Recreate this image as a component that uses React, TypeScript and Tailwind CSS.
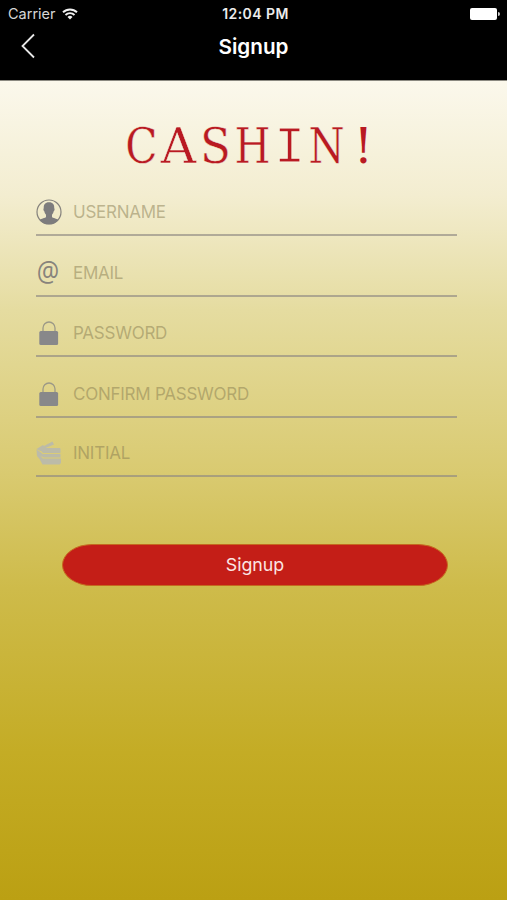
import type { ReactNode } from "react";

const UserIcon = () => (
    <svg viewBox="0 0 26 26" className="h-[26px] w-[26px]">
        <circle cx="13" cy="13" r="12" fill="none" stroke="#85827d" strokeWidth="1.2" />
        <path d="M13 3.200c-3.900 0-5.500 2.500-5.200 6-.8.4-.3 2.700.5 3.100.2 1.500 1 2.700 1.700 3.500v2.200c-.8 1.300-4.600 1.400-6.400 2.900 2 2.700 5.500 4.400 9.400 4.400s7.400-1.700 9.400-4.400c-1.800-1.500-5.600-1.600-6.400-2.900v-2.200c.7-.8 1.500-2 1.700-3.500.8-.4 1.300-2.700.5-3.100.3-3.500-1.300-6-5.200-6z" fill="#7d7c7d" />
    </svg>
);

const AtIcon = () => (
    <span className="-ml-[2px] -mt-[4px] scale-y-[1.14] font-['Open_Sans',sans-serif] text-[25px] font-medium leading-[26px] text-[#87837c]">@</span>
);

const LockIcon = () => (
    <svg viewBox="0 0 26 26" className="h-[26px] w-[26px]">
        <path d="M7 12V8a6 6 0 0 1 12 0v4" fill="none" stroke="#9c9987" strokeWidth="1.3" />
        <rect x="3.3" y="11" width="18.8" height="14" rx="1.5" fill="#88888a" />
    </svg>
);

const MoneyIcon = () => (
    <svg viewBox="0 0 26 26" className="h-[26px] w-[26px]" fill="#bcbba8">
        <path d="M.5 9 7 5l1 1L16.500 1.500l1.500 3L9.500 8 4 11z" />
        <path d="M6 8h18l.5 1v4H7L4 10z" />
        <path d="M.5 9.500 5 12.500 6.500 14h18v3.600H8L4.500 16 7 18.400H25V23l-1.500 1.500H6.500L3.500 19 1 16z" />
    </svg>
);

const Field = ({ icon, label, height }: { icon: ReactNode; label: string; height: string }) => (
    <div className={`flex items-end border-b-2 border-[#8f8982]/65 ${height}`}>
        <div className="mb-[9px] flex h-[26px] w-[26px] items-center justify-center">{icon}</div>
        <span className="mb-[10px] ml-[11px] font-['Inter',sans-serif] text-[17px] leading-6 tracking-[-0.25px] text-[#867b50]/50">
            {label}
        </span>
    </div>
);

// every letter sits in a cell of the same width, like on a typewriter
const letters = [
    { char: "C", style: "font-['DejaVu_Serif',serif] scale-x-[0.88]" },
    { char: "A", style: "font-['DejaVu_Serif',serif] scale-x-[1.02]" },
    { char: "S", style: "font-['DejaVu_Serif',serif] scale-x-[0.94]" },
    { char: "H", style: "font-['DejaVu_Serif',serif] scale-x-[0.86]" },
    { char: "I", style: "relative top-[3px] font-['Liberation_Mono',monospace] text-[52px] [-webkit-text-stroke:1.2px_#f8f4e0]" },
    { char: "N", style: "font-['DejaVu_Serif',serif] scale-x-[0.86]" },
    { char: "!", style: "font-['DejaVu_Serif',serif] [-webkit-text-stroke:0px]" },
];

const App = () => {
    return (
        <div className="flex h-[900px] w-[507px] flex-col overflow-hidden bg-black font-['Inter',sans-serif]">
            <header className="h-20 shrink-0 text-white">
                <div className="grid h-7 grid-cols-3 items-center pl-2 pr-[7px]">
                    <div className="flex items-center text-[14.5px] text-[#d6d6d6]">
                        Carrier
                        <svg viewBox="0 0 16 12" className="ml-[6px] h-3 w-4" fill="none" stroke="#f2f2f2" strokeWidth="1.9">
                            <path d="M1 4.300a10 10 0 0 1 14 0M3.500 7a6.400 6.400 0 0 1 9 0" />
                            <path d="m5.500 9 2.500 2.500L10.500 9a3.600 3.600 0 0 0-5 0z" fill="#f2f2f2" stroke="none" />
                        </svg>
                    </div>
                    <div className="-mt-px ml-[3px] text-center text-[14px] font-semibold tracking-[0.45px] text-[#ececec]">12:04 PM</div>
                    <div className="flex items-center justify-end">
                        <div className="h-3 w-[27px] rounded-[2px] bg-white" />
                        <div className="ml-px h-1 w-[2px] rounded-r bg-[#cccccc]" />
                    </div>
                </div>
                <div className="relative flex h-[38px] items-center justify-center">
                    <svg viewBox="0 0 14 26" className="absolute left-[21px] top-[5px] h-[26px] w-[14px]" fill="none" stroke="#e8e8e8" strokeWidth="1.8">
                        <path d="M13 1.500 1.500 13 13 24.500" />
                    </svg>
                    <h1 className="text-[20.7px] font-semibold">Signup</h1>
                </div>
            </header>
            <main className="flex-1 border-t border-[#8b8981] bg-[linear-gradient(#fbf8ec_0%,#f3edd0_14%,#e5dca0_28%,#d9ca70_48%,#cebb4a_62%,#c4ac25_82%,#bba013_100%)]">
                <div className="ml-[123px] flex h-[107px] pt-[30px] text-[48px] leading-[70px] text-[#b91a22] [-webkit-text-stroke:0.4px_#f8f4e0]">
                    {letters.map((letter) => (
                        <span key={letter.char} className={`flex w-[37px] justify-center ${letter.style}`}>
                            {letter.char}
                        </span>
                    ))}
                </div>
                <div className="ml-9 w-[421px]">
                    <Field icon={<UserIcon />} label="USERNAME" height="h-12" />
                    <Field icon={<AtIcon />} label="EMAIL" height="h-[61px]" />
                    <Field icon={<LockIcon />} label="PASSWORD" height="h-[60px]" />
                    <Field icon={<LockIcon />} label="CONFIRM PASSWORD" height="h-[61px]" />
                    <Field icon={<MoneyIcon />} label="INITIAL" height="h-[59px]" />
                </div>
                <button className="ml-[62px] mt-[67px] block h-[42px] w-[386px] rounded-[30px/21px] border border-[#c5691f] bg-[#c41e17] pt-px text-[17.8px] text-[#fbe5e3]">
                    Signup
                </button>
            </main>
        </div>
    );
};

export default App;
